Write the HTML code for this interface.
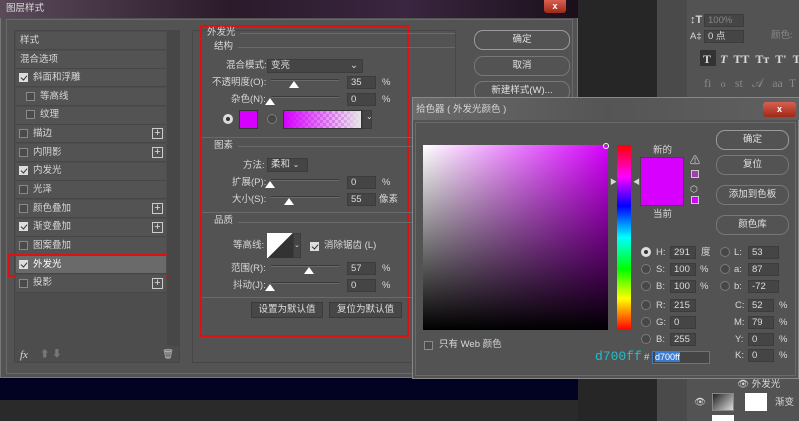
<!DOCTYPE html>
<html><head><meta charset="utf-8"><style>
*{margin:0;padding:0;box-sizing:border-box}
body{width:799px;height:421px;overflow:hidden;background:#262626;position:relative;font-family:"Liberation Sans","Noto Sans CJK SC",sans-serif;font-size:9.5px;color:#d8d8d8}
.a{position:absolute}
.t{position:absolute;white-space:nowrap;line-height:12px}
.row{position:absolute;left:16px;width:150px;height:18px;background:#535353;border-bottom:1px solid #474747}
.cb{position:absolute;width:9px;height:9px;border:1px solid #8a8a8a;background:#4a4a4a}
.cb.on{background:#ddd;border-color:#ddd}
.cb.on:after{content:"";position:absolute;left:2px;top:0px;width:3px;height:5px;border:solid #333;border-width:0 1.5px 1.5px 0;transform:rotate(40deg)}
.plus{position:absolute;left:152px;width:11px;height:11px;border:1px solid #ccc;color:#ddd;font-size:11px;line-height:9px;text-align:center}
.fld{position:absolute;height:13px;background:#454545;border:1px solid #3c3c3c;color:#ddd;padding-left:3px;line-height:11px;font-size:9.5px}
.trk{position:absolute;height:2px;background:#3a3a3a;border-bottom:1px solid #6a6a6a}
.th{position:absolute;width:0;height:0;border-left:5px solid transparent;border-right:5px solid transparent;border-bottom:7px solid #fff}
.btn{position:absolute;border:1px solid #9a9a9a;border-radius:9px;text-align:center;color:#e0e0e0;line-height:17px;font-size:9.5px}
.sbtn{position:absolute;background:#474747;border:1px solid #3a3a3a;text-align:center;line-height:14px;color:#ddd}
.rad{position:absolute;width:10px;height:10px;border-radius:50%;border:1px solid #7a7a7a;background:#474747}
.hl{position:absolute;height:1px;background:#6a6a6a}
</style></head><body>
<!-- backgrounds right -->
<div class="a" style="left:578px;top:0;width:80px;height:421px;background:#262626"></div>
<div class="a" style="left:657px;top:0;width:30px;height:421px;background:#4a4a4a"></div>
<div class="a" style="left:687px;top:0;width:112px;height:421px;background:#535353"></div>
<div class="t" style="left:690px;top:14px;font-size:11px;font-weight:bold">↕T</div>
<div class="fld" style="left:704px;top:14px;width:40px;color:#888">100%</div>
<div class="t" style="left:690px;top:31px">A‡</div>
<div class="fld" style="left:704px;top:30px;width:40px">0 点</div>
<div class="a" style="left:700px;top:50px;width:16px;height:16px;background:#333"></div>
<div class="t" style="left:703px;top:53px;font-family:'Liberation Serif';font-weight:bold;font-size:12px">T&nbsp;&nbsp;&nbsp;<i>T</i>&nbsp;&nbsp;TT&nbsp;&nbsp;Tт&nbsp;&nbsp;T'&nbsp;&nbsp;T,</div>
<div class="t" style="left:704px;top:77px;font-family:'Liberation Serif';font-size:12px;color:#888">fi&nbsp;&nbsp;&nbsp;ℴ&nbsp;&nbsp;&nbsp;st&nbsp;&nbsp;&nbsp;𝒜&nbsp;&nbsp;&nbsp;aa&nbsp;&nbsp;T</div>
<div class="t" style="left:771px;top:30px;color:#888">颜色:</div>
<!-- bottom left -->
<div class="a" style="left:0;top:378px;width:578px;height:22px;background:#020222"></div>
<div class="a" style="left:0;top:400px;width:578px;height:21px;background:#2a2a2a"></div>
<!-- layers -->
<div class="a" style="left:687px;top:378px;width:112px;height:43px;background:#535353"></div>
<div class="t" style="left:737px;top:379px">👁 外发光</div>
<div class="a" style="left:712px;top:393px;width:22px;height:18px;background:linear-gradient(135deg,#222,#ddd);border:1px solid #888"></div>
<div class="a" style="left:745px;top:393px;width:22px;height:18px;background:#fff"></div>
<div class="t" style="left:775px;top:397px">渐变</div>
<div class="t" style="left:694px;top:397px">👁</div>
<div class="a" style="left:712px;top:415px;width:22px;height:6px;background:#fff"></div>

<!-- main dialog -->
<div class="a" style="left:0;top:0;width:578px;height:378px;background:#535353;border:1px solid #777"></div>
<div class="a" style="left:0;top:0;width:578px;height:18px;background:linear-gradient(90deg,#5a4a5a,#2a1a2a 40%,#3a2640 70%,#1a0f1a)"></div>
<div class="t" style="left:6px;top:3px;color:#ddd">图层样式</div>
<div class="a" style="left:544px;top:0;width:22px;height:13px;background:linear-gradient(#d86050,#a02818);border-radius:0 0 3px 3px;color:#fff;font-size:9px;text-align:center;line-height:12px;font-weight:bold">x</div>
<div class="a" style="left:6px;top:19px;width:567px;height:355px;border:1px solid #6a6a6a"></div>
<!-- left list -->
<div class="a" style="left:14px;top:30px;width:166px;height:333px;border:1px solid #474747;background:#4d4d4d"></div>
<div class="row" style="top:32px"></div><div class="t" style="left:20px;top:35px">样式</div>
<div class="row" style="top:51px"></div><div class="t" style="left:20px;top:54px">混合选项</div>
<div class="row" style="top:69px"></div><div class="cb on" style="left:19px;top:73px"></div><div class="t" style="left:33px;top:72px">斜面和浮雕</div>
<div class="row" style="top:88px"></div><div class="cb" style="left:26px;top:92px"></div><div class="t" style="left:40px;top:91px">等高线</div>
<div class="row" style="top:107px"></div><div class="cb" style="left:26px;top:110px"></div><div class="t" style="left:40px;top:109px">纹理</div>
<div class="row" style="top:125px"></div><div class="cb" style="left:19px;top:129px"></div><div class="t" style="left:33px;top:128px">描边</div><div class="plus" style="top:128px">+</div>
<div class="row" style="top:144px"></div><div class="cb" style="left:19px;top:148px"></div><div class="t" style="left:33px;top:147px">内阴影</div><div class="plus" style="top:147px">+</div>
<div class="row" style="top:163px"></div><div class="cb on" style="left:19px;top:166px"></div><div class="t" style="left:33px;top:165px">内发光</div>
<div class="row" style="top:181px"></div><div class="cb" style="left:19px;top:185px"></div><div class="t" style="left:33px;top:184px">光泽</div>
<div class="row" style="top:200px"></div><div class="cb" style="left:19px;top:204px"></div><div class="t" style="left:33px;top:203px">颜色叠加</div><div class="plus" style="top:203px">+</div>
<div class="row" style="top:219px"></div><div class="cb on" style="left:19px;top:222px"></div><div class="t" style="left:33px;top:221px">渐变叠加</div><div class="plus" style="top:222px">+</div>
<div class="row" style="top:237px"></div><div class="cb" style="left:19px;top:241px"></div><div class="t" style="left:33px;top:240px">图案叠加</div>
<div class="row" style="top:256px;background:#6a6a6a"></div><div class="cb on" style="left:19px;top:260px"></div><div class="t" style="left:33px;top:259px;color:#fff">外发光</div>
<div class="a" style="left:8px;top:254px;width:167px;height:23px;border:2px solid #e01010"></div>
<div class="row" style="top:275px"></div><div class="cb" style="left:19px;top:279px"></div><div class="t" style="left:33px;top:277px">投影</div><div class="plus" style="top:278px">+</div>
<div class="a" style="left:167px;top:30px;width:12px;height:316px;background:#474747"></div>
<div class="t" style="left:20px;top:349px;font-style:italic;font-family:'Liberation Serif';font-size:11px">fx</div>
<div class="t" style="left:40px;top:349px;color:#777">⬆ ⬇</div>
<div class="t" style="left:162px;top:349px;color:#bbb">🗑</div>

<!-- middle panel -->
<div class="a" style="left:192px;top:30px;width:264px;height:333px;border:1px solid #474747"></div>
<div class="a" style="left:200px;top:25px;width:209px;height:312px;border:2px solid #e01010"></div>
<div class="t" style="left:207px;top:27px">外发光</div>
<div class="hl" style="left:240px;top:33px;width:215px"></div>
<div class="t" style="left:214px;top:41px">结构</div>
<div class="hl" style="left:238px;top:47px;width:217px"></div>
<div class="t" style="left:226px;top:60px">混合模式:</div>
<div class="fld" style="left:267px;top:59px;width:96px;height:14px">变亮<span style="position:absolute;right:4px">⌄</span></div>
<div class="t" style="left:212px;top:77px">不透明度(O):</div>
<div class="trk" style="left:271px;top:79px;width:68px"></div><div class="th" style="left:289px;top:81px"></div>
<div class="fld" style="left:347px;top:76px;width:29px">35</div><div class="t" style="left:382px;top:77px">%</div>
<div class="t" style="left:231px;top:94px">杂色(N):</div>
<div class="trk" style="left:271px;top:96px;width:68px"></div><div class="th" style="left:265px;top:98px"></div>
<div class="fld" style="left:347px;top:93px;width:29px">0</div><div class="t" style="left:382px;top:94px">%</div>
<div class="rad" style="left:223px;top:114px;background:#ddd;border-color:#ddd"></div><div class="a" style="left:226px;top:117px;width:4px;height:4px;border-radius:50%;background:#333"></div>
<div class="a" style="left:239px;top:110px;width:19px;height:19px;background:#d700ff;border:1px solid #333"></div>
<div class="rad" style="left:267px;top:114px"></div>
<div class="a" style="left:283px;top:110px;width:79px;height:19px;background:linear-gradient(90deg,#d700ff,rgba(215,0,255,0.3) 70%,rgba(230,230,230,1)),repeating-conic-gradient(#ccc 0 25%,#fff 0 50%) 0 0/6px 6px;border:1px solid #333"></div>
<div class="fld" style="left:362px;top:110px;width:10px;height:19px;font-size:8px">⌄</div>
<div class="hl" style="left:202px;top:137px;width:253px"></div>
<div class="t" style="left:214px;top:140px">图素</div>
<div class="hl" style="left:238px;top:146px;width:217px"></div>
<div class="t" style="left:243px;top:160px">方法:</div>
<div class="fld" style="left:267px;top:158px;width:41px;height:14px">柔和 <span style="font-size:8px">⌄</span></div>
<div class="t" style="left:232px;top:177px">扩展(P):</div>
<div class="trk" style="left:271px;top:179px;width:68px"></div><div class="th" style="left:265px;top:181px"></div>
<div class="fld" style="left:347px;top:176px;width:29px">0</div><div class="t" style="left:382px;top:177px">%</div>
<div class="t" style="left:232px;top:194px">大小(S):</div>
<div class="trk" style="left:271px;top:196px;width:68px"></div><div class="th" style="left:284px;top:198px"></div>
<div class="fld" style="left:347px;top:193px;width:29px">55</div><div class="t" style="left:379px;top:194px">像素</div>
<div class="hl" style="left:202px;top:212px;width:253px"></div>
<div class="t" style="left:214px;top:215px">品质</div>
<div class="hl" style="left:238px;top:222px;width:217px"></div>
<div class="t" style="left:233px;top:240px">等高线:</div>
<div class="a" style="left:267px;top:233px;width:26px;height:25px;background:linear-gradient(135deg,#fff 50%,#333 50%)"></div>
<div class="fld" style="left:293px;top:233px;width:8px;height:25px;font-size:7px;line-height:23px;padding-left:0">⌄</div>
<div class="cb on" style="left:310px;top:242px"></div><div class="t" style="left:324px;top:240px">消除锯齿 (L)</div>
<div class="t" style="left:231px;top:263px">范围(R):</div>
<div class="trk" style="left:271px;top:265px;width:68px"></div><div class="th" style="left:304px;top:267px"></div>
<div class="fld" style="left:347px;top:262px;width:29px">57</div><div class="t" style="left:382px;top:263px">%</div>
<div class="t" style="left:233px;top:280px">抖动(J):</div>
<div class="trk" style="left:271px;top:282px;width:68px"></div><div class="th" style="left:265px;top:284px"></div>
<div class="fld" style="left:347px;top:279px;width:29px">0</div><div class="t" style="left:382px;top:280px">%</div>
<div class="hl" style="left:202px;top:297px;width:253px"></div>
<div class="sbtn" style="left:251px;top:302px;width:72px;height:16px">设置为默认值</div>
<div class="sbtn" style="left:329px;top:302px;width:73px;height:16px">复位为默认值</div>

<div class="btn" style="left:474px;top:30px;width:96px;height:20px">确定</div>
<div class="btn" style="left:474px;top:56px;width:96px;height:20px;border-color:#777">取消</div>
<div class="btn" style="left:474px;top:81px;width:96px;height:20px;border-color:#777">新建样式(W)...</div>

<!-- color picker -->
<div class="a" style="left:412px;top:97px;width:387px;height:282px;background:#535353;border:1px solid #888"></div>
<div class="a" style="left:413px;top:98px;width:386px;height:22px;background:linear-gradient(90deg,#6a6a6a,#555 50%,#606060)"></div>
<div class="t" style="left:416px;top:104px">拾色器 ( 外发光颜色 )</div>
<div class="a" style="left:763px;top:102px;width:33px;height:15px;background:linear-gradient(#d86050,#a02818);border-radius:3px;color:#fff;font-size:9px;text-align:center;line-height:14px;font-weight:bold">x</div>
<div class="a" style="left:415px;top:122px;width:381px;height:254px;border:1px solid #6a6a6a"></div>
<div class="a" style="left:423px;top:145px;width:185px;height:185px;background:linear-gradient(to bottom,rgba(0,0,0,0),#000),linear-gradient(to right,#fff,#d700ff)"></div>
<div class="a" style="left:603px;top:143px;width:6px;height:6px;border:1px solid #fff;border-radius:50%"></div>
<div class="a" style="left:617px;top:145px;width:14px;height:185px;background:linear-gradient(#f00,#f0f 17%,#00f 33%,#0ff 50%,#0f0 67%,#ff0 83%,#f00)"></div>
<div class="t" style="left:610px;top:177px;font-size:7px">▶</div><div class="t" style="left:633px;top:177px;font-size:7px">◀</div>
<div class="t" style="left:653px;top:145px">新的</div>
<div class="a" style="left:640px;top:157px;width:44px;height:49px;background:#d700ff;border:1px solid #444"></div>
<div class="t" style="left:653px;top:209px">当前</div>
<div class="t" style="left:690px;top:156px;font-size:10px">⚠</div>
<div class="a" style="left:691px;top:170px;width:8px;height:8px;background:#a040b0;border:1px solid #ccc"></div>
<div class="t" style="left:690px;top:183px;font-size:9px">⬡</div>
<div class="a" style="left:691px;top:196px;width:8px;height:8px;background:#d700ff;border:1px solid #ccc"></div>
<div class="btn" style="left:716px;top:130px;width:73px;height:20px">确定</div>
<div class="btn" style="left:716px;top:155px;width:73px;height:20px;border-color:#777">复位</div>
<div class="btn" style="left:716px;top:185px;width:73px;height:20px;border-color:#777">添加到色板</div>
<div class="btn" style="left:716px;top:215px;width:73px;height:20px;border-color:#777">颜色库</div>

<div class="rad" style="left:641px;top:247px;background:#ddd;border-color:#ddd"></div><div class="a" style="left:644px;top:250px;width:4px;height:4px;border-radius:50%;background:#333"></div>
<div class="t" style="left:656px;top:247px">H:</div><div class="fld" style="left:670px;top:246px;width:26px">291</div><div class="t" style="left:701px;top:247px">度</div>
<div class="rad" style="left:641px;top:264px"></div><div class="t" style="left:656px;top:264px">S:</div><div class="fld" style="left:670px;top:263px;width:26px">100</div><div class="t" style="left:700px;top:264px">%</div>
<div class="rad" style="left:641px;top:281px"></div><div class="t" style="left:656px;top:281px">B:</div><div class="fld" style="left:670px;top:280px;width:26px">100</div><div class="t" style="left:700px;top:281px">%</div>
<div class="rad" style="left:641px;top:300px"></div><div class="t" style="left:656px;top:300px">R:</div><div class="fld" style="left:670px;top:299px;width:26px">215</div>
<div class="rad" style="left:641px;top:317px"></div><div class="t" style="left:656px;top:317px">G:</div><div class="fld" style="left:670px;top:316px;width:26px">0</div>
<div class="rad" style="left:641px;top:334px"></div><div class="t" style="left:656px;top:334px">B:</div><div class="fld" style="left:670px;top:333px;width:26px">255</div>
<div class="rad" style="left:720px;top:247px"></div><div class="t" style="left:734px;top:247px">L:</div><div class="fld" style="left:748px;top:246px;width:31px">53</div>
<div class="rad" style="left:720px;top:264px"></div><div class="t" style="left:734px;top:264px">a:</div><div class="fld" style="left:748px;top:263px;width:31px">87</div>
<div class="rad" style="left:720px;top:281px"></div><div class="t" style="left:734px;top:281px">b:</div><div class="fld" style="left:748px;top:280px;width:31px">-72</div>
<div class="t" style="left:735px;top:300px">C:</div><div class="fld" style="left:748px;top:299px;width:26px">52</div><div class="t" style="left:779px;top:300px">%</div>
<div class="t" style="left:734px;top:317px">M:</div><div class="fld" style="left:748px;top:316px;width:26px">79</div><div class="t" style="left:779px;top:317px">%</div>
<div class="t" style="left:735px;top:334px">Y:</div><div class="fld" style="left:748px;top:333px;width:26px">0</div><div class="t" style="left:779px;top:334px">%</div>
<div class="t" style="left:735px;top:350px">K:</div><div class="fld" style="left:748px;top:349px;width:26px">0</div><div class="t" style="left:779px;top:350px">%</div>
<div class="cb" style="left:424px;top:341px"></div><div class="t" style="left:439px;top:339px">只有 Web 颜色</div>
<div class="t" style="left:595px;top:350px;color:#20c0d0;font-family:'Liberation Mono';font-size:13px;line-height:14px">d700ff</div>
<div class="t" style="left:644px;top:352px">#</div>
<div class="a" style="left:652px;top:351px;width:58px;height:13px;border:1px solid #3a7ad0;background:#454545"></div>
<div class="t" style="left:655px;top:352px;background:#3a7ad0;color:#fff;line-height:10px;font-size:9px">d700ff</div>
</body></html>
